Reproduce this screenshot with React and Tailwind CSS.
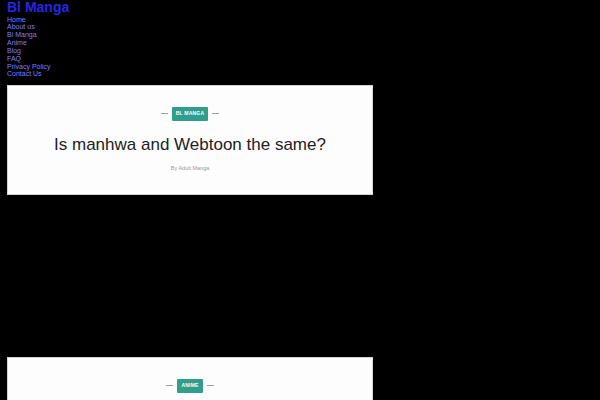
const links = ['Home', 'About us', 'Bl Manga', 'Anime', 'Blog', 'FAQ', 'Privacy Policy', 'Contact Us']

function Card({ tag, title, author }) {
  return (
    <article className="mx-[7px] w-[366px] border border-[#d4d4d4] bg-[#fdfdfd] pt-[21px] text-center">
      <div className="flex items-center justify-center gap-[4px]">
        <span className="h-px w-[7px] bg-[#9e9e9e]" />
        <span className="flex h-[14px] items-center rounded-[1px] bg-[#2f9e8c] px-[4px] text-[5px] font-bold uppercase tracking-[0.2px] text-white">
          {tag}
        </span>
        <span className="h-px w-[7px] bg-[#9e9e9e]" />
      </div>
      {title ? (
        <>
          <h2 className="mt-[12px] text-[17px] leading-[24px] text-[#222]">{title}</h2>
          <p className="mt-[6px] pb-[21px] text-[5.5px] leading-[10px] text-[#999]">By {author}</p>
        </>
      ) : (
        <div className="h-[40px]" />
      )}
    </article>
  )
}

export default function App() {
  return (
    <div className="h-[400px] overflow-hidden bg-black font-['Liberation_Sans',Arial,sans-serif]">
      <header className="px-[7px]">
        <h1 className="text-[14px] font-bold leading-[15.5px] text-[#2626e6]">Bl Manga</h1>
        <ul className="text-[7px] leading-[7.85px] text-[#7f7fff]">
          {links.map((l) => (
            <li key={l}><a href="#">{l}</a></li>
          ))}
        </ul>
      </header>
      <main className="mt-[6.6px] flex flex-col gap-[162px]">
        <Card tag="Bl Manga" title="Is manhwa and Webtoon the same?" author="Adult Manga" />
        <Card tag="Anime" />
      </main>
    </div>
  )
}
